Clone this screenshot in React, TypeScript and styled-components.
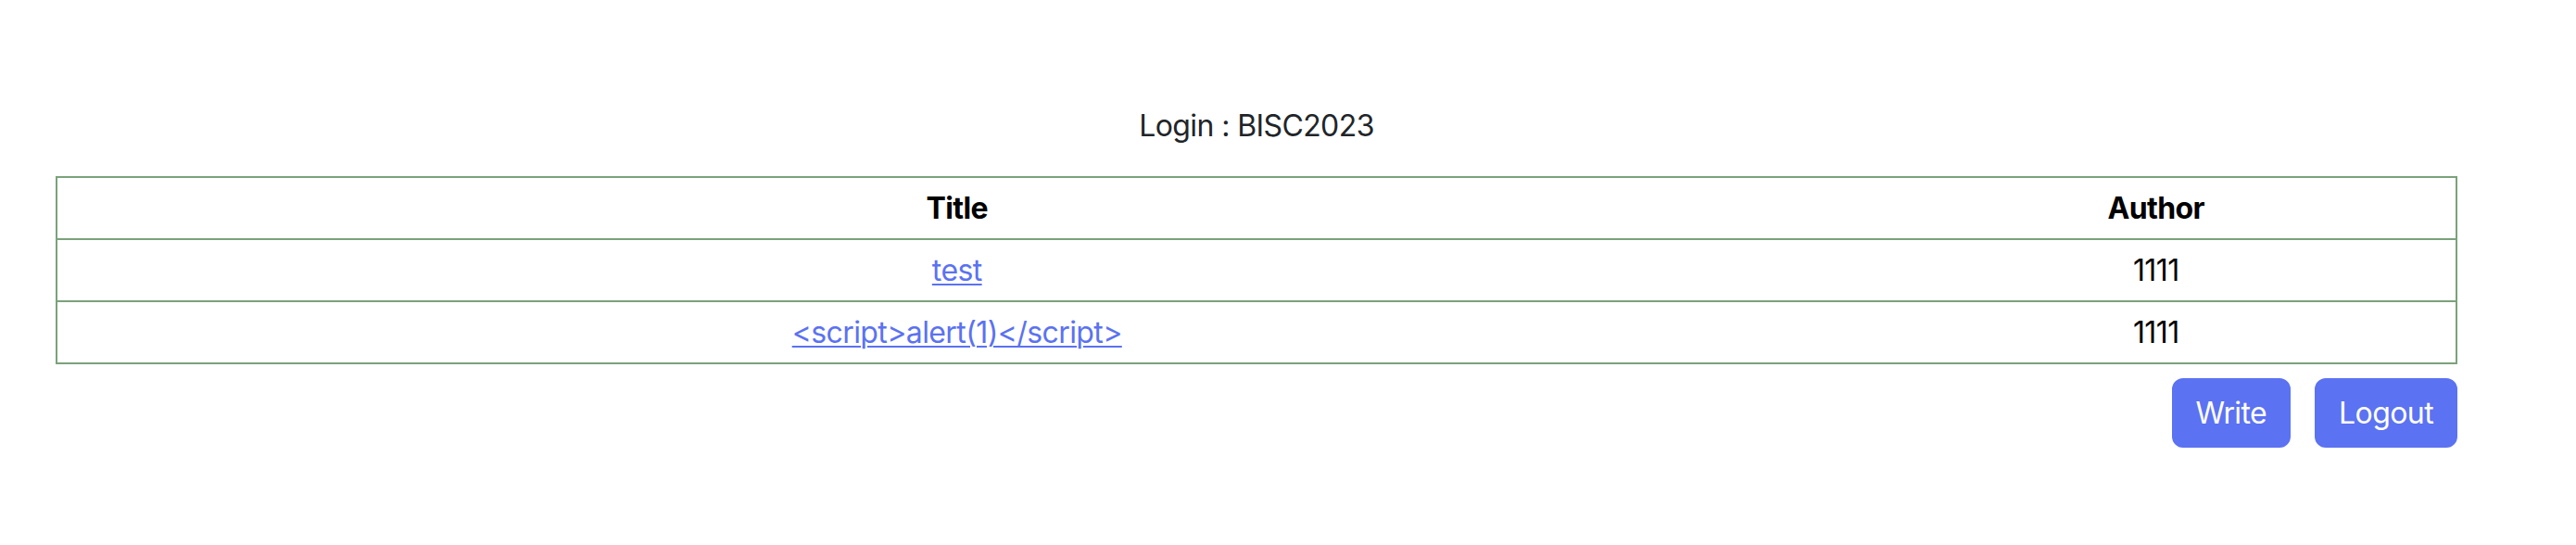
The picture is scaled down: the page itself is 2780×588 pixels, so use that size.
import React from "react";
import styled, { createGlobalStyle } from "styled-components";

const Global = createGlobalStyle`
  html, body { margin: 0; padding: 0; background: #ffffff; }
  body { font-family: Inter, "Noto Sans", "Liberation Sans", sans-serif; color: #212529; letter-spacing: -0.6px; }
`;

const Page = styled.div`
  width: 2592px;
  margin-left: 60px;
  padding-top: 116px;
  display: flex;
  flex-direction: column;
`;

const Heading = styled.div`
  text-align: center;
  font-size: 32px;
  line-height: 39px;
  color: #212529;
  margin-bottom: 35px;
`;

const Table = styled.table`
  width: 100%;
  border-collapse: collapse;
  border: 2px solid #7ba27b;
  font-size: 32px;
`;

const Row = styled.tr`
  border-top: 2px solid #7ba27b;
`;

const Head = styled.th<{ $w?: string }>`
  width: ${(p) => p.$w || "auto"};
  height: 65px;
  padding: 0;
  text-align: center;
  vertical-align: middle;
  font-weight: 700;
  color: #000;
`;

const Cell = styled.td`
  height: 65px;
  padding: 0;
  text-align: center;
  vertical-align: middle;
  color: #000;
`;

const Link = styled.a`
  color: #5b72f2;
  text-decoration: underline;
  text-underline-offset: 3px;
  text-decoration-thickness: 2px;
`;

const Actions = styled.div`
  display: flex;
  justify-content: flex-end;
  gap: 26px;
  margin-top: 15px;
`;

const Button = styled.button`
  font-family: inherit;
  letter-spacing: inherit;
  font-size: 32px;
  line-height: 47px;
  padding: 12px 24px;
  border: 2px solid #5b72f2;
  background: #5b72f2;
  color: #fff;
  border-radius: 12px;
  cursor: pointer;
`;

const rows = [
  { title: "test", author: "1111" },
  { title: "<script>alert(1)</script>", author: "1111" },
];

export default function App() {
  return (
    <>
      <Global />
      <Page>
        <Heading>Login : BISC2023</Heading>
        <Table>
          <thead>
            <Row>
              <Head $w="75%">Title</Head>
              <Head>Author</Head>
            </Row>
          </thead>
          <tbody>
            {rows.map((r, i) => (
              <Row key={i}>
                <Cell>
                  <Link href="#">{r.title}</Link>
                </Cell>
                <Cell>{r.author}</Cell>
              </Row>
            ))}
          </tbody>
        </Table>
        <Actions>
          <Button>Write</Button>
          <Button>Logout</Button>
        </Actions>
      </Page>
    </>
  );
}
